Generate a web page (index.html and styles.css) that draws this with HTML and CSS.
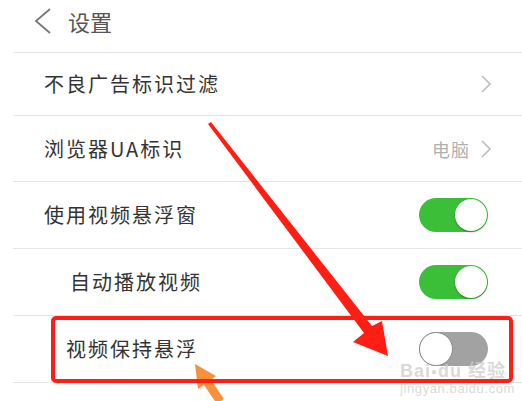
FILE: index.html
```html
<!DOCTYPE html>
<html lang="zh">
<head>
<meta charset="utf-8">
<title>设置</title>
<link rel="stylesheet" href="styles.css">
</head>
<body>
<div class="page">
  <header class="topbar">
    <svg class="back" width="20" height="26" viewBox="0 0 20 26"><polyline points="16,1 2,13 16,25" fill="none" stroke="#777" stroke-width="1.8"/></svg>
    <span class="title">设置</span>
  </header>
  <ul class="list">
    <li class="row r1">
      <span class="label">不良广告标识过滤</span>
      <span class="right"><svg class="chev" width="12" height="20" viewBox="0 0 12 20"><polyline points="2,2 10,10 2,18" fill="none" stroke="#bbb" stroke-width="1.6"/></svg></span>
    </li>
    <li class="row r2">
      <span class="label">浏览器UA标识</span>
      <span class="right"><span class="value">电脑</span><svg class="chev" width="12" height="20" viewBox="0 0 12 20"><polyline points="2,2 10,10 2,18" fill="none" stroke="#bbb" stroke-width="1.6"/></svg></span>
    </li>
    <li class="row toggle-row">
      <span class="label">使用视频悬浮窗</span>
      <span class="switch on"><span class="knob"></span></span>
    </li>
    <li class="row toggle-row sub">
      <span class="label">自动播放视频</span>
      <span class="switch on"><span class="knob"></span></span>
    </li>
    <li class="row toggle-row sub2">
      <span class="label">视频保持悬浮</span>
      <span class="switch off"><span class="knob"></span></span>
    </li>
  </ul>

  <div class="watermark">
    <span class="wm-logo">Bai<span class="paw">●</span>du 经验</span>
    <span class="wm-url">jingyan.baidu.com</span>
  </div>

  <svg class="orange-arrow" width="522" height="401" viewBox="0 0 522 401">
    <polygon points="195,364 216,376 211,380 224,399 217,404 204,385 198,389" fill="#f7913d"/>
  </svg>
  <div class="highlight"></div>
  <svg class="red-arrow" width="522" height="401" viewBox="0 0 522 401">
    <polygon points="208,124 211,122 372,326 382,321 388,356 353,342 364,333" fill="#ff1e14"/>
  </svg>
</div>
</body>
</html>
```
FILE: styles.css
```css
* { box-sizing: border-box; }
html, body { margin: 0; padding: 0; background: #fff; }
body {
  font-family: "Noto Sans CJK SC", "Noto Sans", sans-serif;
  width: 522px;
  height: 401px;
  overflow: hidden;
}
.page { position: relative; width: 522px; height: 401px; }

.topbar {
  height: 52px;
  display: flex;
  align-items: center;
  padding: 0 0 11px 34px;
  gap: 14px;
}
.back { display: block; }
.title { font-size: 22px; color: #555; line-height: 1; }

.list {
  list-style: none;
  margin: 0 0 0 13px;
  padding: 0;
  border-top: 1px solid #e4e4e4;
}
.row {
  height: 67px;
  border-bottom: 1px solid #e4e4e4;
  display: flex;
  align-items: center;
  justify-content: space-between;
  padding: 0 30px 0 31px;
}
.r1 { height: 63px; }
.r2 { height: 66px; }
.toggle-row { padding-right: 34px; }
.sub { padding-left: 57px; }
.sub2 { padding-left: 53px; }
.label { font-size: 20px; letter-spacing: 2px; color: #333; line-height: 1; }
.right { display: flex; align-items: center; gap: 10px; }
.value { font-size: 18px; letter-spacing: 1px; color: #b0b0b0; line-height: 1; }
.chev { display: block; }

.switch {
  position: relative;
  width: 69px;
  height: 34px;
  border-radius: 17px;
  display: block;
}
.switch.on { background: #3bbf38; }
.switch.off { background: #a2a2a2; }
.knob {
  position: absolute;
  top: 1px;
  width: 32px;
  height: 32px;
  border-radius: 50%;
  background: #fff;
}
.on .knob { right: 1px; box-shadow: 0 1px 2px rgba(0,0,0,0.35); }
.off .knob { left: 0; top: 0; width: 34px; height: 34px; border: 1px solid #8a8a8a; }

.watermark {
  position: absolute;
  left: 400px;
  top: 362px;
  display: flex;
  flex-direction: column;
  align-items: flex-start;
  color: rgba(205,205,205,0.75);
  font-family: "Liberation Sans", "Noto Sans CJK SC", sans-serif;
  line-height: 1;
}
.wm-logo { font-size: 18px; font-weight: bold; letter-spacing: 1px; }
.paw { font-size: 10px; vertical-align: 2px; }
.wm-url { font-size: 13px; margin-top: 2px; letter-spacing: 0.6px; }

.orange-arrow, .red-arrow {
  position: absolute;
  left: 0;
  top: 0;
  pointer-events: none;
}
.highlight {
  position: absolute;
  left: 51px;
  top: 316px;
  width: 462px;
  height: 67px;
  border: 4px solid #ff1e14;
  border-radius: 5px;
}
```
